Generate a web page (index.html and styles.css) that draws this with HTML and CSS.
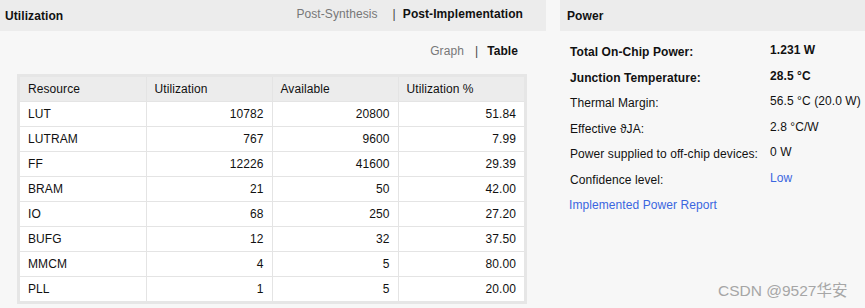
FILE: index.html
```html
<!DOCTYPE html>
<html>
<head>
<meta charset="utf-8">
<link rel="stylesheet" href="styles.css">
</head>
<body>
<div class="page">
  <section class="panel util">
    <header class="phead">
      <span class="ptitle">Utilization</span>
      <nav class="tabs">
        <span class="tab">Post-Synthesis</span>
        <span class="sep">|</span>
        <span class="tab active">Post-Implementation</span>
      </nav>
    </header>
    <div class="views">
      <span class="tab">Graph</span>
      <span class="sep">|</span>
      <span class="tab active">Table</span>
    </div>
    <div class="tframe">
      <table class="utable">
        <thead>
          <tr><th>Resource</th><th>Utilization</th><th>Available</th><th>Utilization %</th></tr>
        </thead>
        <tbody>
          <tr><td>LUT</td><td class="n">10782</td><td class="n">20800</td><td class="n">51.84</td></tr>
          <tr><td>LUTRAM</td><td class="n">767</td><td class="n">9600</td><td class="n">7.99</td></tr>
          <tr><td>FF</td><td class="n">12226</td><td class="n">41600</td><td class="n">29.39</td></tr>
          <tr><td>BRAM</td><td class="n">21</td><td class="n">50</td><td class="n">42.00</td></tr>
          <tr><td>IO</td><td class="n">68</td><td class="n">250</td><td class="n">27.20</td></tr>
          <tr><td>BUFG</td><td class="n">12</td><td class="n">32</td><td class="n">37.50</td></tr>
          <tr><td>MMCM</td><td class="n">4</td><td class="n">5</td><td class="n">80.00</td></tr>
          <tr><td>PLL</td><td class="n">1</td><td class="n">5</td><td class="n">20.00</td></tr>
        </tbody>
      </table>
    </div>
  </section>
  <section class="panel power">
    <header class="phead">
      <span class="ptitle">Power</span>
    </header>
    <div class="pgrid">
      <span class="lbl b">Total On-Chip Power:</span><span class="val b">1.231 W</span>
      <span class="lbl b">Junction Temperature:</span><span class="val b">28.5 °C</span>
      <span class="lbl">Thermal Margin:</span><span class="val">56.5 °C (20.0 W)</span>
      <span class="lbl">Effective ϑJA:</span><span class="val">2.8 °C/W</span>
      <span class="lbl">Power supplied to off-chip devices:</span><span class="val">0 W</span>
      <span class="lbl">Confidence level:</span><span class="val link">Low</span>
      <span class="lbl link full">Implemented Power Report</span>
    </div>
  </section>
</div>
<div class="watermark">CSDN @9527华安</div>
</body>
</html>
```
FILE: styles.css
```css
html, body {
  margin: 0;
  padding: 0;
  background: #f7f7f7;
  font-family: "Liberation Sans", Arial, "Noto Sans CJK SC", sans-serif;
  font-size: 12px;
  color: #111;
}
.page {
  display: flex;
  gap: 14px;
  height: 308px;
  letter-spacing: 0.08px;
}
.panel.util {
  width: 546px;
  flex: none;
}
.panel.power {
  flex: 1;
}
.phead {
  height: 31px;
  background: #ececec;
  display: flex;
  align-items: center;
  justify-content: space-between;
  padding: 0 23px 0 5px;
}
.power .phead {
  padding-left: 7px;
}
.ptitle {
  font-weight: bold;
  margin-top: 1px;
}
.tabs, .views {
  display: flex;
  align-items: center;
}
.tab {
  color: #777;
}
.tab.active {
  color: #111;
  font-weight: bold;
}
.sep {
  color: #444;
}
.tabs .sep {
  margin: 0 7px 0 15px;
}
.views .sep {
  margin: 0 9px 0 11px;
}
.tabs {
  margin-top: -3px;
}
.views {
  justify-content: flex-end;
  padding-right: 28px;
  height: 38px;
  margin-top: 1px;
}
.tframe {
  margin: 4px 19px 0 17px;
  border: 3px solid #e6e6e6;
  background: #e6e6e6;
}
.utable {
  width: 100%;
  border-collapse: collapse;
  table-layout: fixed;
  background: #fff;
}
.utable th, .utable td {
  height: 24px;
  padding: 0 8px;
  border: 1px solid #e4e4e4;
  font-weight: normal;
  text-align: left;
  white-space: nowrap;
}
.utable tr:first-child th { border-top: none; }
.utable tr:last-child td { border-bottom: none; }
.utable th:first-child, .utable td:first-child { border-left: none; }
.utable th:last-child, .utable td:last-child { border-right: none; }
.utable th {
  background: #ececec;
}
.utable td.n {
  text-align: right;
}
.pgrid {
  display: grid;
  grid-template-columns: 200px 1fr;
  padding: 9px 0 0 10px;
  line-height: 25.5px;
}
.lbl.b, .val.b {
  font-weight: bold;
}
.val {
  position: relative;
  top: -2px;
}
.link {
  color: #3a66e0;
}
.full {
  grid-column: 1 / 3;
  margin-left: -1px;
}
.watermark {
  position: absolute;
  left: 718px;
  top: 278px;
  font-size: 15.5px;
  color: #a6a6a6;
}
```
